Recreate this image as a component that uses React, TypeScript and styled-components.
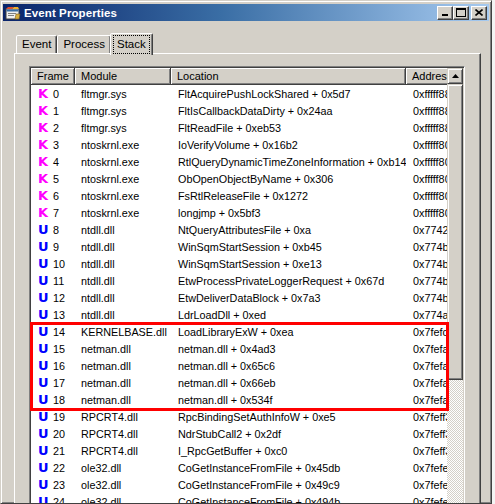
import React from 'react';
import styled, { createGlobalStyle } from 'styled-components';

type Frame = {
  mode: 'K' | 'U';
  module: string;
  location: string;
  address: string;
};

const frames: Frame[] = [
  { mode: 'K', module: 'fltmgr.sys', location: 'FltAcquirePushLockShared + 0x5d7', address: '0xfffff880012a15d7' },
  { mode: 'K', module: 'fltmgr.sys', location: 'FltIsCallbackDataDirty + 0x24aa', address: '0xfffff880012a24aa' },
  { mode: 'K', module: 'fltmgr.sys', location: 'FltReadFile + 0xeb53', address: '0xfffff880012beb53' },
  { mode: 'K', module: 'ntoskrnl.exe', location: 'IoVerifyVolume + 0x16b2', address: '0xfffff80002f516b2' },
  { mode: 'K', module: 'ntoskrnl.exe', location: 'RtlQueryDynamicTimeZoneInformation + 0xb14', address: '0xfffff80002f4db14' },
  { mode: 'K', module: 'ntoskrnl.exe', location: 'ObOpenObjectByName + 0x306', address: '0xfffff80002f4e306' },
  { mode: 'K', module: 'ntoskrnl.exe', location: 'FsRtlReleaseFile + 0x1272', address: '0xfffff80002f51272' },
  { mode: 'K', module: 'ntoskrnl.exe', location: 'longjmp + 0x5bf3', address: '0xfffff80002c85bf3' },
  { mode: 'U', module: 'ntdll.dll', location: 'NtQueryAttributesFile + 0xa', address: '0x7742135a' },
  { mode: 'U', module: 'ntdll.dll', location: 'WinSqmStartSession + 0xb45', address: '0x774b0b45' },
  { mode: 'U', module: 'ntdll.dll', location: 'WinSqmStartSession + 0xe13', address: '0x774b0e13' },
  { mode: 'U', module: 'ntdll.dll', location: 'EtwProcessPrivateLoggerRequest + 0x67d', address: '0x774b267d' },
  { mode: 'U', module: 'ntdll.dll', location: 'EtwDeliverDataBlock + 0x7a3', address: '0x774b37a3' },
  { mode: 'U', module: 'ntdll.dll', location: 'LdrLoadDll + 0xed', address: '0x774a40ed' },
  { mode: 'U', module: 'KERNELBASE.dll', location: 'LoadLibraryExW + 0xea', address: '0x7fefc0ea' },
  { mode: 'U', module: 'netman.dll', location: 'netman.dll + 0x4ad3', address: '0x7fefa4ad3' },
  { mode: 'U', module: 'netman.dll', location: 'netman.dll + 0x65c6', address: '0x7fefa65c6' },
  { mode: 'U', module: 'netman.dll', location: 'netman.dll + 0x66eb', address: '0x7fefa66eb' },
  { mode: 'U', module: 'netman.dll', location: 'netman.dll + 0x534f', address: '0x7fefa534f' },
  { mode: 'U', module: 'RPCRT4.dll', location: 'RpcBindingSetAuthInfoW + 0xe5', address: '0x7feff3e5' },
  { mode: 'U', module: 'RPCRT4.dll', location: 'NdrStubCall2 + 0x2df', address: '0x7feff32df' },
  { mode: 'U', module: 'RPCRT4.dll', location: 'I_RpcGetBuffer + 0xc0', address: '0x7feff30c0' },
  { mode: 'U', module: 'ole32.dll', location: 'CoGetInstanceFromFile + 0x45db', address: '0x7fefe45db' },
  { mode: 'U', module: 'ole32.dll', location: 'CoGetInstanceFromFile + 0x49c9', address: '0x7fefe49c9' },
  { mode: 'U', module: 'ole32.dll', location: 'CoGetInstanceFromFile + 0x494b', address: '0x7fefe494b' },
];

const ROW_H = 17;
const HEADER_H = 17;
const highlight = { from: 14, to: 18 };

const GlobalStyle = createGlobalStyle`
  html, body {
    margin: 0;
    padding: 0;
    background: #f4f4f4;
    overflow: hidden;
  }
  body {
    font-family: "Liberation Sans", Arial, sans-serif;
    font-size: 10.8px;
    color: #000;
  }
`;

const Window = styled.div`
  box-sizing: border-box;
  width: 492px;
  height: 504px;
  background: #d4d0c8;
  border: 1px solid;
  border-color: #d4d0c8 #404040 #404040 #d4d0c8;
  box-shadow: inset 1px 1px #ffffff, inset -1px -1px #808080;
  padding: 3px 2px 0 2px;
  overflow: hidden;
`;

const TitleBar = styled.div`
  height: 17px;
  display: flex;
  align-items: center;
  padding-left: 2px;
  background: linear-gradient(to right, #0a246a 0%, #3a6ea5 45%, #a6caf0 100%);
`;

const TitleText = styled.span`
  margin-left: 3px;
  flex: 1;
  color: #fff;
  font-weight: bold;
  font-size: 11.5px;
  letter-spacing: 0.1px;
`;

const CaptionButtons = styled.div`
  display: flex;
  margin-right: 2px;
`;

const CaptionButton = styled.div<{ $gap?: boolean }>`
  box-sizing: border-box;
  width: 16px;
  height: 14px;
  margin-left: ${(p) => (p.$gap ? '2px' : '0')};
  background: #d4d0c8;
  border: 1px solid;
  border-color: #ffffff #404040 #404040 #ffffff;
  box-shadow: inset -1px -1px #808080;
  display: flex;
  align-items: center;
  justify-content: center;
`;

const Content = styled.div`
  padding: 12px 0 0 11px;
`;

const TabStrip = styled.div`
  display: flex;
  align-items: flex-end;
  height: 20px;
  padding-left: 2px;
  position: relative;
  z-index: 1;
`;

const Tab = styled.div<{ $active?: boolean }>`
  box-sizing: border-box;
  height: ${(p) => (p.$active ? '22px' : '18px')};
  margin-bottom: ${(p) => (p.$active ? '-2px' : '0')};
  margin-left: ${(p) => (p.$active ? '-1px' : '0')};
  margin-right: ${(p) => (p.$active ? '-2px' : '0')};
  padding: ${(p) => (p.$active ? '1px 2px 0 2px' : '2px 5px 0 5px')};
  background: #d4d0c8;
  border: 1px solid;
  border-bottom: none;
  border-color: #ffffff #404040 transparent #ffffff;
  border-radius: 2px 2px 0 0;
  box-shadow: inset -1px 0 #808080;
  font-size: 11.5px;
`;

const FocusLabel = styled.span`
  display: inline-block;
  padding: 2px 3px 3px 3px;
  border: 1px dotted #000;
`;

const Panel = styled.div`
  box-sizing: border-box;
  width: 467px;
  height: 460px;
  background: #d4d0c8;
  border: 1px solid;
  border-color: #ffffff #404040 #404040 #ffffff;
  box-shadow: inset -1px -1px #808080;
  padding: 12px 0 0 14px;
`;

const ListView = styled.div`
  position: relative;
  box-sizing: border-box;
  width: 436px;
  height: 460px;
  background: #fff;
  border: 1px solid;
  border-color: #808080 #ffffff #ffffff #808080;
  box-shadow: inset 1px 1px #404040, inset -1px -1px #d4d0c8;
  padding: 1px;
  display: flex;
`;

const Table = styled.div`
  flex: 1;
  overflow: hidden;
`;

const HeaderRow = styled.div`
  display: flex;
  height: ${HEADER_H}px;
  white-space: nowrap;
`;

const HeaderCell = styled.div<{ $w: number }>`
  box-sizing: border-box;
  flex: 0 0 ${(p) => p.$w}px;
  background: #d4d0c8;
  border-right: 1px solid #404040;
  border-bottom: 1px solid #404040;
  box-shadow: inset 1px 1px #ffffff, inset -1px -1px #808080;
  padding: 2px 0 0 6px;
  font-size: 11px;
  overflow: hidden;
`;

const Row = styled.div`
  display: flex;
  height: ${ROW_H}px;
  align-items: center;
  white-space: nowrap;
`;

const Cell = styled.div<{ $w: number; $pad?: number }>`
  flex: 0 0 ${(p) => p.$w}px;
  padding-left: ${(p) => p.$pad ?? 6}px;
  box-sizing: border-box;
  overflow: hidden;
  display: flex;
  align-items: center;
`;

const Mode = styled.span<{ $mode: 'K' | 'U' }>`
  width: 15px;
  font-weight: bold;
  font-size: 13px;
  font-family: "DejaVu Sans", "Liberation Sans", sans-serif;
  color: ${(p) => (p.$mode === 'K' ? '#ff00ff' : '#0000ff')};
`;

const ScrollBar = styled.div`
  width: 16px;
  display: flex;
  flex-direction: column;
  background: repeating-conic-gradient(#d4d0c8 0 25%, #ffffff 0 50%) 0 0 / 2px 2px;
`;

const ScrollButton = styled.div`
  box-sizing: border-box;
  width: 16px;
  height: 16px;
  background: #d4d0c8;
  border: 1px solid;
  border-color: #d4d0c8 #404040 #404040 #d4d0c8;
  box-shadow: inset 1px 1px #ffffff, inset -1px -1px #808080;
  display: flex;
  align-items: center;
  justify-content: center;
`;

const Thumb = styled.div`
  box-sizing: border-box;
  width: 16px;
  height: 296px;
  background: #d4d0c8;
  border: 1px solid;
  border-color: #d4d0c8 #404040 #404040 #d4d0c8;
  box-shadow: inset 1px 1px #ffffff, inset -1px -1px #808080;
`;

const Highlight = styled.div`
  position: absolute;
  left: 0;
  width: 419px;
  box-sizing: border-box;
  border: 3px solid #ff0000;
  pointer-events: none;
`;

const cols = { frame: 44, module: 96, location: 235, address: 120 };

const AppIcon = () => (
  <svg width="16" height="16" viewBox="0 0 16 16">
    <rect x="1" y="4" width="13" height="10" fill="#f0f0f0" stroke="#404040" />
    <rect x="1.5" y="4.5" width="12" height="2" fill="#3a6ea5" />
    <path d="M3 2 L9 2 L7 4 L1 4 Z" fill="#e05030" />
    <path d="M9 2 L13 2 L14 4 L7 4 Z" fill="#f0b030" />
    <rect x="3" y="8" width="8" height="1" fill="#808080" />
    <rect x="3" y="10" width="6" height="1" fill="#808080" />
    <path d="M11 9 L15 9 L14 14 L10 14 Z" fill="#d8b040" stroke="#806020" strokeWidth="0.6" />
  </svg>
);

const App: React.FC = () => {
  const boxTop = 1 + HEADER_H + highlight.from * ROW_H - 1;
  const boxHeight = (highlight.to - highlight.from + 1) * ROW_H + 4;
  return (
    <>
      <GlobalStyle />
      <Window>
        <TitleBar>
          <AppIcon />
          <TitleText>Event Properties</TitleText>
          <CaptionButtons>
            <CaptionButton>
              <svg width="8" height="8" viewBox="0 0 8 8">
                <rect x="1" y="5" width="6" height="2" fill="#000" />
              </svg>
            </CaptionButton>
            <CaptionButton>
              <svg width="10" height="9" viewBox="0 0 10 9">
                <rect x="0.5" y="0.5" width="9" height="8" fill="none" stroke="#000" />
                <rect x="0" y="0" width="10" height="2" fill="#000" />
              </svg>
            </CaptionButton>
            <CaptionButton $gap>
              <svg width="8" height="7" viewBox="0 0 8 7">
                <path d="M0.5 0.5 L7.5 6.5 M7.5 0.5 L0.5 6.5" stroke="#000" strokeWidth="1.6" />
              </svg>
            </CaptionButton>
          </CaptionButtons>
        </TitleBar>
        <Content>
          <TabStrip>
            <Tab>Event</Tab>
            <Tab>Process</Tab>
            <Tab $active>
              <FocusLabel>Stack</FocusLabel>
            </Tab>
          </TabStrip>
          <Panel>
            <ListView>
              <Table>
                <HeaderRow>
                  <HeaderCell $w={cols.frame}>Frame</HeaderCell>
                  <HeaderCell $w={cols.module}>Module</HeaderCell>
                  <HeaderCell $w={cols.location}>Location</HeaderCell>
                  <HeaderCell $w={cols.address}>Address</HeaderCell>
                </HeaderRow>
                {frames.map((f, i) => (
                  <Row key={i}>
                    <Cell $w={cols.frame} $pad={7}>
                      <Mode $mode={f.mode}>{f.mode}</Mode>
                      {i}
                    </Cell>
                    <Cell $w={cols.module}>{f.module}</Cell>
                    <Cell $w={cols.location} $pad={7}>{f.location}</Cell>
                    <Cell $w={cols.address} $pad={7}>{f.address}</Cell>
                  </Row>
                ))}
              </Table>
              <ScrollBar>
                <ScrollButton>
                  <svg width="7" height="4" viewBox="0 0 7 4">
                    <path d="M3.5 0 L7 4 L0 4 Z" fill="#000" />
                  </svg>
                </ScrollButton>
                <Thumb />
              </ScrollBar>
              <Highlight style={{ top: boxTop, height: boxHeight }} />
            </ListView>
          </Panel>
        </Content>
      </Window>
    </>
  );
};

export default App;
